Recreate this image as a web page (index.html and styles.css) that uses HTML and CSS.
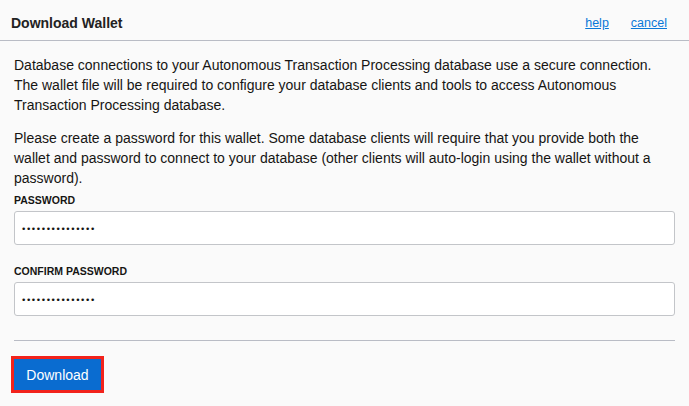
FILE: index.html
```html
<!DOCTYPE html>
<html lang="en">
<head>
<meta charset="utf-8">
<title>Download Wallet</title>
<link rel="stylesheet" href="styles.css">
</head>
<body>
<div class="dialog">
  <header class="dialog-header">
    <h1 class="dialog-title">Download Wallet</h1>
    <nav class="dialog-links">
      <a href="#" class="link">help</a>
      <a href="#" class="link">cancel</a>
    </nav>
  </header>
  <main class="dialog-body">
    <p class="para">Database connections to your Autonomous Transaction Processing database use a secure connection. The wallet file will be required to configure your database clients and tools to access Autonomous Transaction Processing database.</p>
    <p class="para para-second">Please create a password for this wallet. Some database clients will require that you provide both the wallet and password to connect to your database (other clients will auto-login using the wallet without a password).</p>
    <div class="field">
      <label class="field-label">PASSWORD</label>
      <div class="field-input"><span class="dots">•••••••••••••••</span></div>
    </div>
    <div class="field field-second">
      <label class="field-label">CONFIRM PASSWORD</label>
      <div class="field-input"><span class="dots">•••••••••••••••</span></div>
    </div>
    <hr class="divider">
    <div class="actions">
      <button class="btn-primary">Download</button>
    </div>
  </main>
</div>
</body>
</html>
```

FILE: styles.css
```css
html, body {
  margin: 0;
  padding: 0;
  background: #fafafa;
}
body {
  font-family: "Liberation Sans", Arial, sans-serif;
  color: #161513;
  width: 689px;
  height: 406px;
  overflow: hidden;
}
.dialog-header {
  height: 41px;
  border-bottom: 1px solid #b9bcc5;
  display: flex;
  align-items: center;
  justify-content: space-between;
  padding: 0 22px 0 11px;
  box-sizing: border-box;
}
.dialog-title {
  margin: 0;
  font-size: 14px;
  font-weight: 700;
  color: #222;
  padding-top: 5px;
}
.dialog-links {
  display: flex;
  gap: 22px;
  padding-top: 6px;
}
.link {
  font-size: 12.5px;
  color: #0a78d8;
  text-decoration: underline;
}
.dialog-body {
  padding: 14px 14px 0 14px;
}
.para {
  margin: 0;
  font-size: 14px;
  line-height: 20px;
  color: #161513;
}
.para-second {
  margin-top: 13px;
}
.field {
  margin-top: 5px;
}
.field-second {
  margin-top: 19px;
}
.field-label {
  display: block;
  font-size: 10.5px;
  font-weight: 700;
  line-height: 14px;
  color: #161513;
  margin-bottom: 4px;
}
.field-input {
  height: 34px;
  box-sizing: border-box;
  background: #fff;
  border: 1px solid #c3c5c9;
  border-radius: 3px;
  display: flex;
  align-items: center;
  padding-left: 7px;
}
.dots {
  font-size: 9.5px;
  letter-spacing: 1.6px;
  color: #161513;
}
.divider {
  margin: 24px 0 0 0;
  border: 0;
  border-top: 1px solid #b9bcc5;
  height: 0;
}
.actions {
  padding-top: 18px;
}
.btn-primary {
  margin-left: 0;
  width: 87px;
  height: 31px;
  background: #0a6cd0;
  color: #fff;
  border: 0;
  font-family: "Liberation Sans", Arial, sans-serif;
  font-size: 14px;
  outline: 3px solid #f2231c;
  padding: 0;
  cursor: pointer;
}
```
